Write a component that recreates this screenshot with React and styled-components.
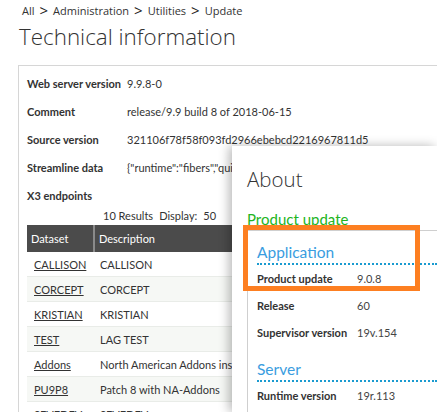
import React from "react";
import styled, { createGlobalStyle } from "styled-components";

const GlobalStyle = createGlobalStyle`
  html, body {
    margin: 0;
    padding: 0;
    width: 437px;
    height: 412px;
    overflow: hidden;
    background: #ffffff;
  }
  body {
    font-family: Lato, "Open Sans", "Liberation Sans", sans-serif;
    color: #333333;
  }
`;

const Page = styled.div`
  position: relative;
  width: 437px;
  height: 412px;
  overflow: hidden;
  padding: 3px 0 0 19px;
  box-sizing: border-box;
`;

const Breadcrumb = styled.div`
  display: flex;
  align-items: center;
  gap: 5px;
  font-family: "Open Sans", Lato, sans-serif;
  font-size: 11px;
  margin-left: 3px;
  height: 14px;
  color: #333;
`;

const Sep = styled.span`
  font-size: 15px;
  line-height: 1;
  color: #222;
`;

const Title = styled.h1`
  margin: 4px 0 0 0;
  font-family: "Open Sans", Lato, sans-serif;
  font-size: 22.4px;
  font-weight: 300;
  line-height: 32px;
  color: #333;
`;

const Panel = styled.div`
  margin-top: 12px;
  margin-left: -1px;
  width: 700px;
  border: 1px solid #d6d6d6;
  padding: 3px 0 0 8px;
  box-sizing: border-box;
  height: 400px;
`;

const InfoRow = styled.div`
  display: grid;
  grid-template-columns: 100px 1fr;
  height: 28px;
  align-items: center;
  font-size: 11px;
`;

const Label = styled.span`
  font-weight: 700;
  color: #333;
  white-space: nowrap;
`;

const Value = styled.span`
  color: #333;
  white-space: nowrap;
`;

const ResultsBar = styled.div`
  display: flex;
  align-items: center;
  gap: 6px;
  padding-left: 76px;
  height: 12px;
  margin-bottom: 4px;
  font-size: 11px;
`;

const DisplayValue = styled.span`
  width: 26px;
`;

const Caret = styled.span`
  width: 0;
  height: 0;
  border-left: 5px solid transparent;
  border-right: 5px solid transparent;
  border-top: 5px solid #dddddd;
`;

const Table = styled.table`
  border-collapse: collapse;
  width: 420px;
  font-size: 11px;
`;

const Th = styled.th`
  background: #4b4b4b;
  color: #ffffff;
  font-weight: 400;
  text-align: left;
  height: 27px;
  padding: 0 4px;
  width: ${(p) => p.$w || "auto"};
  border-left: ${(p) => (p.$sep ? "2px solid #8a8a8a" : "none")};
`;

const Tr = styled.tr`
  background: ${(p) => (p.$alt ? "#f6f8f5" : "#ffffff")};
  border-bottom: 1px solid #e9ece8;
`;

const Td = styled.td`
  height: 24px;
  padding: 0 4px 0 ${(p) => (p.$first ? "7px" : "6px")};
  white-space: nowrap;
`;

const DataLink = styled.a`
  color: #333;
  text-decoration: underline;
`;

const Modal = styled.div`
  position: absolute;
  left: 232px;
  top: 146px;
  right: 0;
  bottom: 0;
  background: #ffffff;
  box-shadow: -3px 0 10px rgba(0, 0, 0, 0.28);
  padding: 15px 0 0 15px;
  box-sizing: border-box;
`;

const ModalTitle = styled.h2`
  margin: 0;
  font-family: "Open Sans", Lato, sans-serif;
  font-size: 20.5px;
  font-weight: 300;
  line-height: 36px;
  color: #333;
`;

const ProductHeading = styled.div`
  margin: 15px 0 4px 0;
  font-size: 15px;
  color: #22b422;
  line-height: 14px;
`;

const Section = styled.div`
  position: relative;
  border-top: 1px solid #cfcfcf;
  border-left: 1px solid #cfcfcf;
  padding: 12px 0 0 9px;
  height: 300px;
`;

const Highlight = styled.div`
  position: absolute;
  left: -5px;
  top: -6px;
  width: 177px;
  height: 66px;
  border: 5px solid #fd7f21;
  box-sizing: border-box;
  pointer-events: none;
`;

const SectionTitle = styled.div`
  font-size: 15.5px;
  color: #3a9de0;
  line-height: 18px;
  padding-bottom: 2px;
  border-bottom: 2px dotted #1a9bd0;
  margin-top: ${(p) => p.$mt || "0"};
`;

const ModalRow = styled.div`
  display: grid;
  grid-template-columns: 100px 1fr;
  align-items: center;
  height: 27px;
  font-size: 11px;
`;

const ModalValue = styled.span`
  color: #444;
`;

const info = [
  ["Web server version", "9.9.8-0"],
  ["Comment", "release/9.9 build 8 of 2018-06-15"],
  ["Source version", "321106f78f58f093fd2966ebebcd2216967811d5"],
  ["Streamline data", '{"runtime":"fibers","quiet":false}'],
  ["X3 endpoints", ""],
];

const rows = [
  ["CALLISON", "CALLISON"],
  ["CORCEPT", "CORCEPT"],
  ["KRISTIAN", "KRISTIAN"],
  ["TEST", "LAG TEST"],
  ["Addons", "North American Addons installed"],
  ["PU9P8", "Patch 8 with NA-Addons"],
  ["SEVEDEV", "SEVEDEV"],
];

export default function App() {
  return (
    <>
      <GlobalStyle />
      <Page>
        <Breadcrumb>
          <span>All</span>
          <Sep>&gt;</Sep>
          <span>Administration</span>
          <Sep>&gt;</Sep>
          <span>Utilities</span>
          <Sep>&gt;</Sep>
          <span>Update</span>
        </Breadcrumb>
        <Title>Technical information</Title>
        <Panel>
          {info.map(([l, v]) => (
            <InfoRow key={l}>
              <Label>{l}</Label>
              <Value>{v}</Value>
            </InfoRow>
          ))}
          <ResultsBar>
            <span>10 Results</span>
            <span>Display:</span>
            <DisplayValue>50</DisplayValue>
            <Caret />
          </ResultsBar>
          <Table>
            <thead>
              <tr>
                <Th $w="58px">Dataset</Th>
                <Th $sep>Description</Th>
              </tr>
            </thead>
            <tbody>
              {rows.map(([d, desc], i) => (
                <Tr key={d} $alt={i % 2 === 1}>
                  <Td $first>
                    <DataLink>{d}</DataLink>
                  </Td>
                  <Td>{desc}</Td>
                </Tr>
              ))}
            </tbody>
          </Table>
        </Panel>
        <Modal>
          <ModalTitle>About</ModalTitle>
          <ProductHeading>Product update</ProductHeading>
          <Section>
            <Highlight />
            <SectionTitle>Application</SectionTitle>
            <ModalRow>
              <Label>Product update</Label>
              <ModalValue>9.0.8</ModalValue>
            </ModalRow>
            <ModalRow>
              <Label>Release</Label>
              <ModalValue>60</ModalValue>
            </ModalRow>
            <ModalRow>
              <Label>Supervisor version</Label>
              <ModalValue>19v.154</ModalValue>
            </ModalRow>
            <SectionTitle $mt="14px">Server</SectionTitle>
            <ModalRow>
              <Label>Runtime version</Label>
              <ModalValue>19r.113</ModalValue>
            </ModalRow>
          </Section>
        </Modal>
      </Page>
    </>
  );
}
